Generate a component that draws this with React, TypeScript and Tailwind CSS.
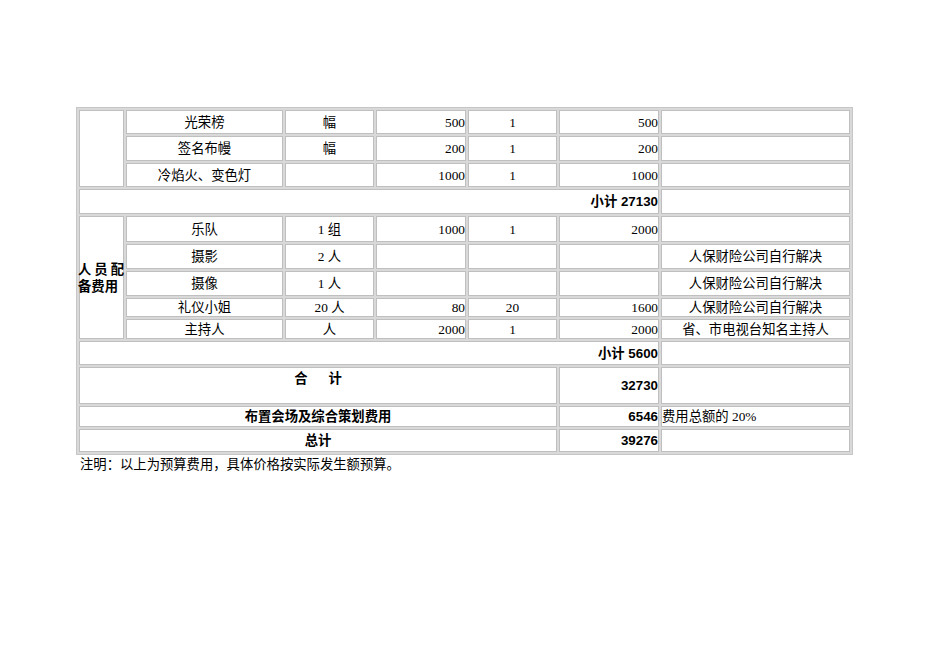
import React from "react";

const serif = "font-['Liberation_Serif','Noto_Sans_CJK_SC',serif]";
const sans = "font-['Liberation_Sans','Noto_Sans_CJK_SC',sans-serif] font-bold";

type CellProps = {
  children?: React.ReactNode;
  className?: string;
};

function Cell({ children, className = "" }: CellProps) {
  return (
    <div
      className={`bg-white border border-[#bfbfbf] flex items-center text-[13.33px] leading-[15px] text-black whitespace-nowrap overflow-visible ${className}`}
    >
      {children}
    </div>
  );
}

const C = `${serif} justify-center`;
const R = `${serif} justify-end`;

function ItemRow({
  name,
  unit,
  price,
  qty,
  amount,
  note,
}: {
  name: string;
  unit: string;
  price: string;
  qty: string;
  amount: string;
  note: string;
}) {
  return (
    <>
      <Cell className={C}>{name}</Cell>
      <Cell className={C}>{unit}</Cell>
      <Cell className={R}>{price}</Cell>
      <Cell className={C}>{qty}</Cell>
      <Cell className={R}>{amount}</Cell>
      <Cell className={C}>{note}</Cell>
    </>
  );
}

export default function App() {
  return (
    <div className="w-[950px] h-[672px] bg-white pt-[107px] pl-[76px]">
      <div className="w-[777px] border border-[#c6c6c6] bg-[#d9d9d9] p-[2px] grid gap-[2px] grid-cols-[45px_157px_89px_90px_89px_100px_189px] grid-rows-[24px_25px_24px_25px_26px_25px_25px_19px_20px_24px_37px_21px_23px]">
        <Cell className="row-span-3" />
        <ItemRow name="光荣榜" unit="幅" price="500" qty="1" amount="500" note="" />
        <ItemRow name="签名布幔" unit="幅" price="200" qty="1" amount="200" note="" />
        <ItemRow name="冷焰火、变色灯" unit="" price="1000" qty="1" amount="1000" note="" />

        <Cell className={`col-span-6 justify-end ${sans}`}>小计 27130</Cell>
        <Cell />

        <Cell className={`row-span-5 ${sans}`}>
          <div className="-ml-[2px] flex flex-col leading-[17px]">
            <div className="flex w-[46px] justify-between">
              <span>人</span>
              <span>员</span>
              <span>配</span>
            </div>
            <div>备费用</div>
          </div>
        </Cell>
        <ItemRow name="乐队" unit="1 组" price="1000" qty="1" amount="2000" note="" />
        <ItemRow name="摄影" unit="2 人" price="" qty="" amount="" note="人保财险公司自行解决" />
        <ItemRow name="摄像" unit="1 人" price="" qty="" amount="" note="人保财险公司自行解决" />
        <ItemRow name="礼仪小姐" unit="20 人" price="80" qty="20" amount="1600" note="人保财险公司自行解决" />
        <ItemRow name="主持人" unit="人" price="2000" qty="1" amount="2000" note="省、市电视台知名主持人" />

        <Cell className={`col-span-6 justify-end ${sans}`}>小计 5600</Cell>
        <Cell />

        <Cell className={`col-span-5 justify-center !items-start pt-[3px] ${sans}`}>
          合<span className="inline-block w-[21px]" />计
        </Cell>
        <Cell className={`justify-end ${sans}`}>32730</Cell>
        <Cell />

        <Cell className={`col-span-5 justify-center ${sans}`}>布置会场及综合策划费用</Cell>
        <Cell className={`justify-end ${sans}`}>6546</Cell>
        <Cell className={`justify-start ${serif}`}>费用总额的 20%</Cell>

        <Cell className={`col-span-5 justify-center ${sans}`}>总计</Cell>
        <Cell className={`justify-end ${sans}`}>39276</Cell>
        <Cell />
      </div>
      <div className={`pl-[4px] pt-[2px] text-[13.33px] leading-[15px] text-black ${serif}`}>
        注明：以上为预算费用，具体价格按实际发生额预算。
      </div>
    </div>
  );
}
